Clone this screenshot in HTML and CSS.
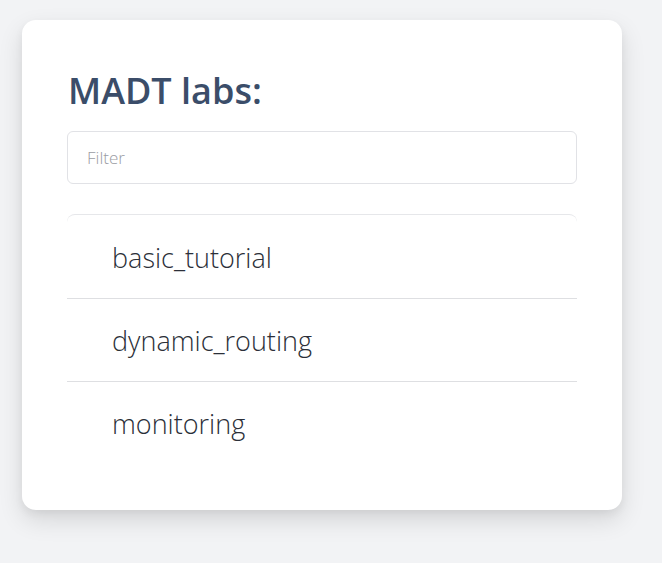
FILE: index.html
```html
<!DOCTYPE html>
<html>
<head>
<meta charset="utf-8">
<link rel="stylesheet" href="styles.css">
</head>
<body>
<div class="card">
  <h1 class="title">MADT labs:</h1>
  <input class="filter" type="text" placeholder="Filter">
  <ul class="labs">
    <li class="lab">basic_tutorial</li>
    <li class="lab">dynamic_routing</li>
    <li class="lab">monitoring</li>
  </ul>
</div>
</body>
</html>
```

FILE: styles.css
```css
html, body {
  margin: 0;
  padding: 0;
}
body {
  background: #f2f3f5;
  font-family: "Open Sans", "Noto Sans", sans-serif;
  padding: 20px 40px 53px 22px;
  min-height: 563px;
  box-sizing: border-box;
}
.card {
  width: 600px;
  box-sizing: border-box;
  background: #fff;
  border-radius: 14px;
  box-shadow: 0 10px 25px rgba(0, 0, 0, 0.12), 0 4px 8px rgba(0, 0, 0, 0.05);
  padding: 51px 45px 30px 45px;
  height: 490px;
}
.title {
  margin: 0 0 20px 1px;
  font-size: 36px;
  font-weight: 600;
  color: #3b4d69;
  line-height: 40px;
}
.filter {
  display: block;
  width: 100%;
  box-sizing: border-box;
  height: 53px;
  border: 1px solid #e1e2e6;
  border-radius: 6px;
  padding: 0 19px;
  font-family: "Open Sans", sans-serif;
  font-size: 17px;
  font-weight: 300;
  color: #333;
  outline: none;
}
.filter::placeholder {
  color: #9a9ca3;
}
.labs {
  list-style: none;
  margin: 30px 0 0 0;
  padding: 1px 0 0 0;
  border-top: 1px solid #e6e7ea;
  border-radius: 8px 8px 0 0;
}
.lab {
  height: 83px;
  box-sizing: border-box;
  display: flex;
  align-items: center;
  padding-left: 45px;
  font-size: 27px;
  font-weight: 300;
  color: #2b2f38;
  border-bottom: 1px solid #dedfe2;
}
.lab:last-child {
  border-bottom: none;
}
```
